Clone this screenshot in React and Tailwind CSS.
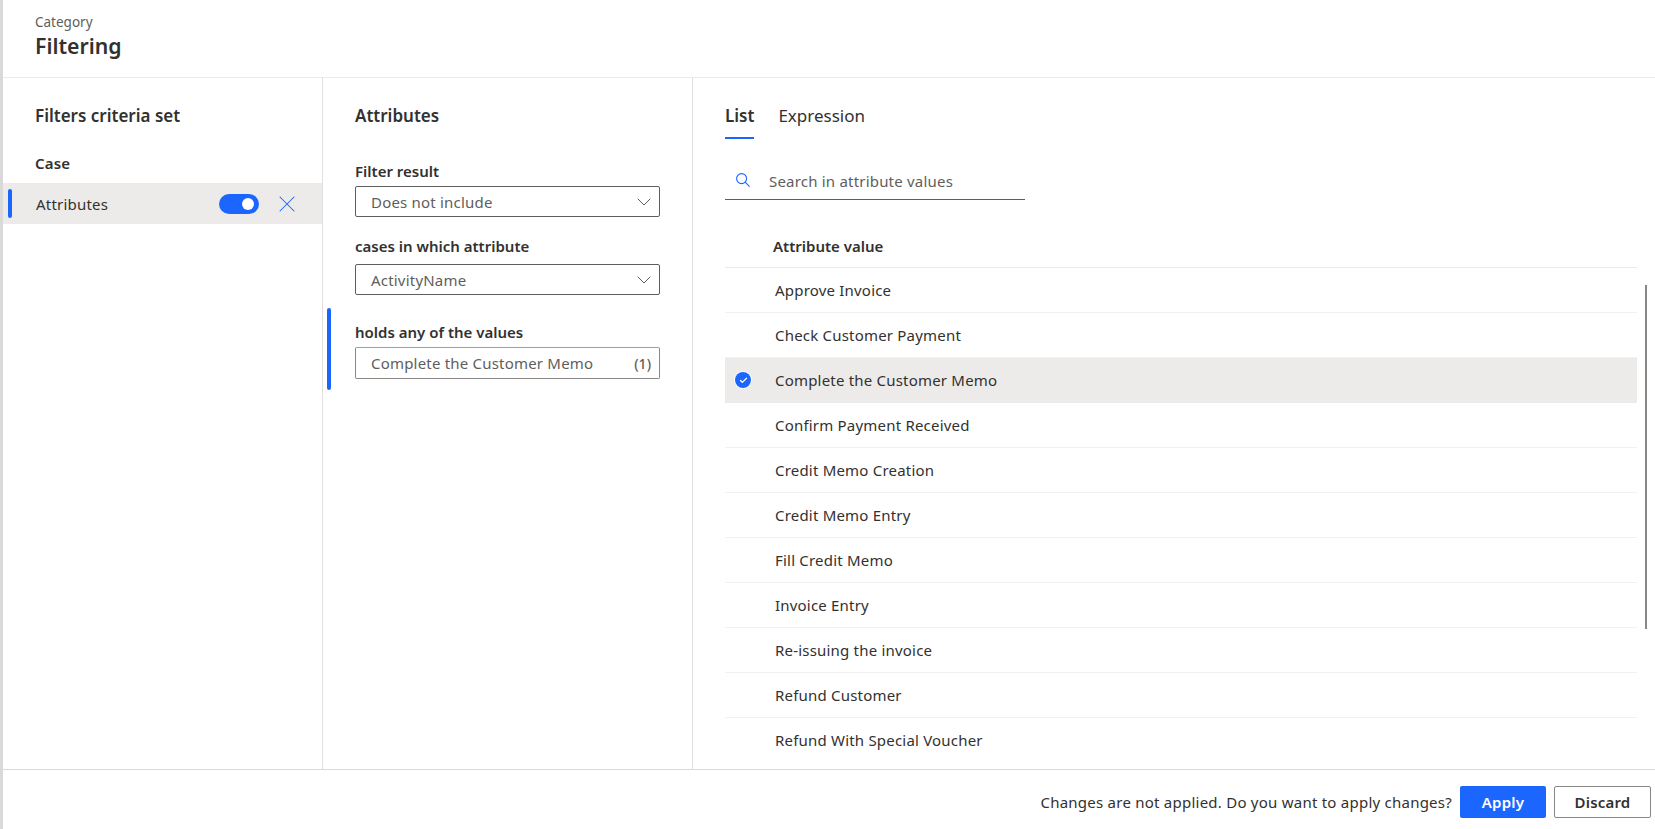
import { useState } from "react";
import { X, ChevronDown, Check } from "lucide-react";

const attributeValues = [
  "Approve Invoice",
  "Check Customer Payment",
  "Complete the Customer Memo",
  "Confirm Payment Received",
  "Credit Memo Creation",
  "Credit Memo Entry",
  "Fill Credit Memo",
  "Invoice Entry",
  "Re-issuing the invoice",
  "Refund Customer",
  "Refund With Special Voucher",
];

function SelectBox({ label, value, className, gap }) {
  return (
    <div className={className}>
      <div className={`text-[15px] leading-[20px] tracking-normal font-semibold text-[#323130] ${gap}`}>{label}</div>
      <div className="h-[31px] border border-[#605e5c] rounded-[2px] flex items-center justify-between pl-[15px] pr-[3px] text-[15px] text-[#605e5c]">
        <span className="pt-[1px]">{value}</span>
        <ChevronDown size={24} strokeWidth={1} className="text-[#605e5c]" />
      </div>
    </div>
  );
}

export default function App() {
  const [selected] = useState("Complete the Customer Memo");

  return (
    <div className="h-[829px] w-[1655px] overflow-hidden bg-white border-l-[3px] border-[#d9d9d9] flex flex-col text-[#323130] font-['Noto_Sans','Open_Sans',sans-serif] tracking-[0.2px]">
      {/* Header */}
      <div className="h-[78px] shrink-0 border-b border-[#edebe9] pl-[32px] pt-[13px]">
        <div className="text-[13.5px] leading-[18px] tracking-normal text-[#605e5c]">Category</div>
        <div className="text-[21.25px] leading-[28px] tracking-normal font-semibold mt-[1px]">Filtering</div>
      </div>

      <div className="flex-1 min-h-0 flex">
        {/* Filters criteria set */}
        <div className="w-[320px] shrink-0 border-r border-[#e1dfdd] pt-[27px]">
          <div className="pl-[32px] text-[17px] leading-[22px] tracking-normal font-semibold">Filters criteria set</div>
          <div className="pl-[32px] mt-[26px] text-[15px] leading-[20px] font-semibold">Case</div>
          <div className="mt-[10px] h-[41px] bg-[#edebe9] flex items-center relative pl-[33px] pr-[21px]">
            <div className="absolute left-[5px] top-[6px] w-[4px] h-[29px] rounded-full bg-[#1b66ff]" />
            <span className="text-[15px] flex-1 pt-[2px]">Attributes</span>
            <div className="w-[40px] h-[20px] rounded-full bg-[#1b66ff] flex items-center justify-end pr-[5px]">
              <div className="w-[12px] h-[12px] rounded-full bg-white" />
            </div>
            <X size={28} strokeWidth={0.9} className="ml-[14px] text-[#1b66ff]" />
          </div>
        </div>

        {/* Attributes */}
        <div className="w-[370px] shrink-0 border-r border-[#e1dfdd] pt-[27px] pl-[32px] pr-[32px] relative">
          <div className="text-[17px] leading-[22px] tracking-normal font-semibold">Attributes</div>
          <SelectBox label="Filter result" value="Does not include" className="mt-[34px]" gap="mb-[5px]" />
          <SelectBox label="cases in which attribute" value="ActivityName" className="mt-[19px]" gap="mb-[8px]" />
          <div className="absolute left-[4px] top-[230px] w-[4px] h-[82px] rounded-full bg-[#1b66ff]" />
          <div className="mt-[27px]">
            <div className="text-[15px] leading-[20px] tracking-normal font-semibold mb-[5px]">holds any of the values</div>
            <div className="h-[32px] border border-[#8a8886] border-t-[#a19f9d] rounded-[2px] flex items-center justify-between pl-[15px] pr-[8px] text-[15px] text-[#605e5c]">
              <span>{selected}</span>
              <span className="font-medium text-[14px] tracking-normal">(1)</span>
            </div>
          </div>
        </div>

        {/* Values list */}
        <div className="flex-1 min-w-0 relative pl-[32px] pr-[18px] pt-[27px]">
          <div className="flex gap-[24px] text-[17px] leading-[22px] tracking-normal">
            <div className="font-semibold pb-[10px] border-b-2 border-[#1b66ff]">List</div>
            <div className="text-[#323130]">Expression</div>
          </div>
          <div className="mt-[29px] w-[300px] h-[32px] border-b border-[#605e5c] flex items-center pl-[11px] pb-[4px] text-[15px] text-[#605e5c]">
            <svg width="14" height="14" viewBox="0 0 14 14" fill="none" stroke="#1b66ff" strokeWidth="1.1" className="mr-[19px] -mt-[3px]">
              <circle cx="5.6" cy="5.6" r="5" />
              <path d="M9.2 9.2L13.6 13.6" />
            </svg>
            <span>Search in attribute values</span>
          </div>
          <div className="mt-[23px] h-[45px] flex items-center pl-[48px] pt-[2px] text-[15px] tracking-normal font-semibold border-b border-[#edebe9]">
            Attribute value
          </div>
          {attributeValues.map((v, i) => (
            <div
              key={v}
              className={`h-[45px] flex items-center text-[15px] ${
                i === attributeValues.length - 1 ? "" : "border-b"
              } ${v === selected ? "bg-[#edebe9] border-[#edebe9]" : "border-[#f3f2f1]"}`}
            >
              <div className="w-[50px] pl-[10px] shrink-0">
                {v === selected && (
                  <div className="w-[16px] h-[16px] rounded-full bg-[#1b66ff] ring-1 ring-white flex items-center justify-center">
                    <Check size={9} strokeWidth={3.5} className="text-white" />
                  </div>
                )}
              </div>
              {v}
            </div>
          ))}
          <div className="absolute left-[952px] top-[207px] w-[2px] h-[344px] bg-[#8a8886]" />
        </div>
      </div>

      {/* Footer */}
      <div className="h-[60px] shrink-0 border-t border-[#d9d9d9] flex items-center justify-end pr-[4px] pt-[5px] text-[15px]">
        <span className="mr-[8px] tracking-[0.24px]">Changes are not applied. Do you want to apply changes?</span>
        <button className="w-[86px] h-[32px] rounded-[2px] bg-[#1b66ff] text-white font-semibold">Apply</button>
        <button className="ml-[8px] w-[97px] h-[32px] rounded-[2px] border border-[#8a8886] font-semibold">Discard</button>
      </div>
    </div>
  );
}
